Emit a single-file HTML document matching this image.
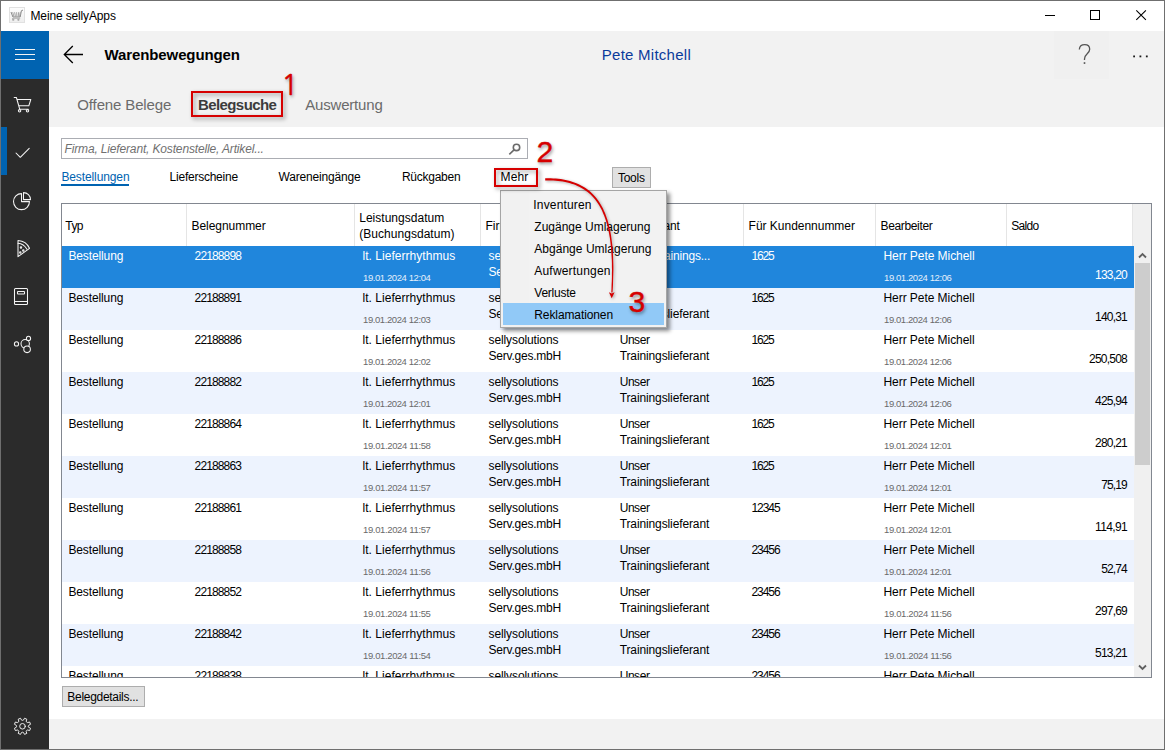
<!DOCTYPE html>
<html lang="de">
<head>
<meta charset="utf-8">
<title>Meine sellyApps</title>
<style>
*{box-sizing:border-box;margin:0;padding:0}
html,body{width:1165px;height:750px;overflow:hidden;background:#fff}
body{font-family:"Liberation Sans",sans-serif;font-size:12px;color:#000;position:relative}
.a{position:absolute}
.t{position:absolute;white-space:nowrap}
svg{position:absolute;overflow:visible}
#win{position:absolute;left:0;top:0;width:1165px;height:750px;border:1px solid #6f6f6f;pointer-events:none}
#titlebar{left:1px;top:1px;width:1163px;height:30px;background:#fff}
#side{left:1px;top:31px;width:48px;height:718px;background:#2b2b2b}
#ham{left:1px;top:31px;width:48px;height:48px;background:#0063b1}
#ind{left:1px;top:127px;width:6px;height:48px;background:#0063b1}
#hdr{left:49px;top:31px;width:1115px;height:96px;background:#f2f2f2}
#helpbg{left:1054px;top:31px;width:55px;height:48px;background:#f0f0f0}
#content{left:49px;top:127px;width:1115px;height:592px;background:#fff}
#foot{left:49px;top:719px;width:1115px;height:30px;background:#f2f2f2}
.redbox{position:absolute;border:2px solid #d60000;filter:drop-shadow(2px 2px 2px rgba(0,0,0,.4))}
#search{left:61px;top:138px;width:467px;height:21px;border:1px solid #abadb3;background:#fff}
#uline{left:61px;top:184px;width:68px;height:2px;background:#0063b1}
.btn{position:absolute;background:#e1e1e1;border:1px solid #adadad}
#tbl{left:61px;top:203px;width:1091px;height:475px;border:1px solid #828790;background:#fff}
#thead{left:62px;top:204px;width:1089px;height:42px;background:#fff}
.sep{position:absolute;top:204px;width:1px;height:42px;background:#e5e5e5}
#hfill{left:1133px;top:204px;width:18px;height:42px;background:#f0f0f0}
#tbody{left:62px;top:246px;width:1072px;height:431px;overflow:hidden;background:#fff}
.row{position:absolute;left:0;width:1072px;height:42px}
.alt{background:#edf3fe}
.sel{background:#2086dc}
#sbar{left:1134px;top:246px;width:17px;height:431px;background:#f0f0f0}
#thumb{left:1135px;top:263px;width:15px;height:202px;background:#cdcdcd}
#menu{left:500px;top:190px;width:167px;height:138px;background:#f2f2f2;border:1px solid #a5a5a5;box-shadow:3px 3px 4px rgba(0,0,0,.45)}
#mgut{left:501px;top:191px;width:28px;height:136px;background:#f1f1f1}
.rd{color:#d60000;font-family:"Liberation Sans","Noto Sans CJK JP",sans-serif;text-shadow:1px 2px 3.500px rgba(0,0,0,.45);-webkit-text-stroke:.35px #d60000}
#n1{font-family:"NanumGothic","Liberation Sans",sans-serif;-webkit-text-stroke:.5px #d60000}
#mhi{left:503px;top:303px;width:161px;height:22px;background:#91c9f7}
</style>
</head>
<body>
<div id="titlebar" class="a"></div>
<div id="side" class="a"></div>
<div id="ham" class="a"></div>
<div id="ind" class="a"></div>
<div id="hdr" class="a"></div>
<div id="helpbg" class="a"></div>
<div id="content" class="a"></div>
<div id="foot" class="a"></div>

<!-- title icon + window controls -->
<svg id="ticon" style="left:9px;top:7px" width="16" height="16" viewBox="0 0 16 16">
<defs><linearGradient id="tg" x1="0" y1="0" x2="0" y2="1"><stop offset="0" stop-color="#fdfdfd"/><stop offset="1" stop-color="#eeeeee"/></linearGradient></defs>
<rect x="0.5" y="0.5" width="15" height="15" fill="url(#tg)" stroke="#e1e1e1"/>
<path d="M2 5 L3.900 10 H11.200 L12.400 3.700 L14 3.100" fill="none" stroke="#8a8a8a" stroke-width="1"/>
<path d="M3.700 5.200 l1.300 4.600 M5.600 5.200 l.900 4.600 M7.600 5.200 l.300 4.600 M9.600 5.200 l-.300 4.600 M11.300 5.200 l-.800 4.600" fill="none" stroke="#9c9c9c" stroke-width=".9"/>
<path d="M3 11.500h8.200" stroke="#b0b0b0" stroke-width=".8"/>
<path d="M3 12.800h2.400M8.200 12.800h2.400M4.200 11.800v2M9.400 11.800v2" stroke="#a0a0a0" stroke-width=".9"/>
</svg>
<svg style="left:1040px;top:5px" width="120" height="22" viewBox="1040 5 120 22">
<path d="M1045 15.5h10" stroke="#000" stroke-width="1" fill="none"/>
<rect x="1090.5" y="10.5" width="9" height="9" stroke="#000" stroke-width="1" fill="none"/>
<path d="M1136.3 10.3l9.6 9.6M1145.9 10.3l-9.6 9.6" stroke="#000" stroke-width="1.1" fill="none"/>
</svg>

<!-- sidebar icons -->
<svg id="sicons" style="left:0;top:0" width="50" height="750" viewBox="0 0 50 750" fill="none" stroke="#f4f4f4" stroke-width="1.050" stroke-linecap="round" stroke-linejoin="round">
<path d="M15 49.5h20M15 54.5h20M15 59.5h20" stroke-width="1" stroke-linecap="butt"/>
<!-- cart -->
<path d="M14.2 97.5h2.2l3.300 11.700h8.600M17.200 99.500h13.600l-2 6.300h-9.600"/>
<circle cx="19.600" cy="110.800" r="1.200"/><circle cx="27.500" cy="110.800" r="1.200"/>
<!-- check -->
<path d="M16 153l4.3 4.3L29.2 148.3"/>
<!-- pie -->
<path d="M21.5 193.6a8 8 0 1 0 8 8h-8z"/>
<path d="M23.5 192.6v7h7a7 7 0 0 0-7-7z"/>
<!-- pizza -->
<path d="M18 240.5c5 .3 9.5 3.3 11.5 7.8l-11.5 8.4z"/>
<path d="M18 243.3c3.8.4 7 2.6 8.8 5.8"/>
<circle cx="21" cy="247.5" r=".7"/><circle cx="23.3" cy="250.5" r=".7"/><circle cx="20.3" cy="252.5" r=".7"/>
<!-- book -->
<rect x="14.5" y="288.5" width="13" height="16" rx="1"/>
<path d="M14.5 301.5h13"/>
<rect x="17.5" y="291.5" width="7" height="2.5" rx=".5"/>
<!-- share -->
<circle cx="25.200" cy="343.800" r="4.200"/>
<g fill="#2b2b2b"><circle cx="16.500" cy="343.900" r="2.100"/><circle cx="28.500" cy="338.400" r="2.100"/><circle cx="27.100" cy="349.300" r="3.300"/></g>
<!-- gear -->
<g transform="translate(22.5 726.3)" stroke-width=".95">
<circle r="2.8"/>
<path d="M6.22 0.99 L8.05 2.01 L7.11 4.27 L5.10 3.70 L4.17 4.17 L3.70 5.10 L4.27 7.11 L2.01 8.05 L0.99 6.22 L0.00 5.90 L-0.99 6.22 L-2.01 8.05 L-4.27 7.11 L-3.70 5.10 L-4.17 4.17 L-5.10 3.70 L-7.11 4.27 L-8.05 2.01 L-6.22 0.99 L-5.90 0.00 L-6.22 -0.99 L-8.05 -2.01 L-7.11 -4.27 L-5.10 -3.70 L-4.17 -4.17 L-3.70 -5.10 L-4.27 -7.11 L-2.01 -8.05 L-0.99 -6.22 L-0.00 -5.90 L0.99 -6.22 L2.01 -8.05 L4.27 -7.11 L3.70 -5.10 L4.17 -4.17 L5.10 -3.70 L7.11 -4.27 L8.05 -2.01 L6.22 -0.99 L5.90 -0.00Z"/>
</g>
</svg>

<!-- header icons -->
<svg style="left:0;top:0" width="1165" height="130" viewBox="0 0 1165 130" fill="none">
<path d="M83 54.5H64.5M72.8 46l-8.5 8.5 8.5 8.5" stroke="#000" stroke-width="1.3"/>
<path d="M1079.3 49.5c.3-3.2 2.6-4.8 5.4-4.8 3 0 5 1.9 5 4.6 0 2.300-1.300 3.600-2.900 5.000-1.500 1.300-2.300 2.400-2.300 4.600v1" stroke="#555" stroke-width="1.300"/>
<rect x="1083.700" y="62.2" width="1.600" height="1.700" fill="#555"/>
<rect x="1133.200" y="55.500" width="1.800" height="1.800" fill="#1a1a1a"/><rect x="1139.500" y="55.500" width="1.800" height="1.800" fill="#1a1a1a"/><rect x="1145.900" y="55.500" width="1.800" height="1.800" fill="#1a1a1a"/>
</svg>

<!-- content widgets -->
<div id="search" class="a"></div>
<svg style="left:508px;top:142px" width="14" height="14" viewBox="508 142 14 14" fill="none" stroke="#6a6a6a" stroke-width="1.600">
<circle cx="516.500" cy="147.400" r="3.200"/><path d="M514.300 149.700l-5 4.600"/>
</svg>
<div id="uline" class="a"></div>
<div class="btn" style="left:612px;top:167px;width:39px;height:21px"></div>

<!-- table -->
<div id="tbl" class="a"></div>
<div id="thead" class="a"></div>
<div class="sep" style="left:186px"></div>
<div class="sep" style="left:354px"></div>
<div class="sep" style="left:480px"></div>
<div class="sep" style="left:612px"></div>
<div class="sep" style="left:743px"></div>
<div class="sep" style="left:875px"></div>
<div class="sep" style="left:1006px"></div>
<div class="sep" style="left:1132px"></div>
<div id="hfill" class="a"></div>
<div id="tbody" class="a">
<div class="row sel" style="top:0"></div>
<div class="row alt" style="top:42px"></div>
<div class="row alt" style="top:126px"></div>
<div class="row alt" style="top:210px"></div>
<div class="row alt" style="top:294px"></div>
<div class="row alt" style="top:378px"></div>
<span class="t" style="left:6.40px;top:2.00px;font-size:12px;line-height:17px;letter-spacing:-0.118px;color:#fff;">Bestellung</span>
<span class="t" style="left:132.60px;top:2.00px;font-size:12px;line-height:17px;letter-spacing:-0.874px;color:#fff;">22188898</span>
<span class="t" style="left:300.50px;top:2.00px;font-size:12px;line-height:17px;letter-spacing:0.039px;color:#fff;">lt. Lieferrhythmus</span>
<span class="t" style="left:301.00px;top:25.00px;font-size:9.5px;line-height:13px;letter-spacing:-0.405px;color:#e4effb;">19.01.2024 12:04</span>
<span class="t" style="left:426.50px;top:2.00px;font-size:12px;line-height:17px;letter-spacing:-0.105px;color:#fff;">sellysolutions</span>
<span class="t" style="left:426.50px;top:18.00px;font-size:12px;line-height:17px;letter-spacing:-0.224px;color:#fff;">Serv.ges.mbH</span>
<span class="t" style="left:557.70px;top:2.00px;font-size:12px;line-height:17px;letter-spacing:-0.201px;color:#fff;">Unser Trainings...</span>
<span class="t" style="left:689.40px;top:2.00px;font-size:12px;line-height:17px;letter-spacing:-1.107px;color:#fff;">1625</span>
<span class="t" style="left:821.50px;top:2.00px;font-size:12px;line-height:17px;letter-spacing:-0.06px;color:#fff;">Herr Pete Michell</span>
<span class="t" style="left:822.00px;top:25.00px;font-size:9.5px;line-height:13px;letter-spacing:-0.405px;color:#e4effb;">19.01.2024 12:06</span>
<span class="t" style="left:1033.10px;top:21.00px;font-size:12px;line-height:17px;letter-spacing:-0.806px;color:#fff;">133,20</span>
<span class="t" style="left:6.40px;top:44.00px;font-size:12px;line-height:17px;letter-spacing:-0.118px;">Bestellung</span>
<span class="t" style="left:132.60px;top:44.00px;font-size:12px;line-height:17px;letter-spacing:-0.874px;">22188891</span>
<span class="t" style="left:300.50px;top:44.00px;font-size:12px;line-height:17px;letter-spacing:0.039px;">lt. Lieferrhythmus</span>
<span class="t" style="left:301.00px;top:67.00px;font-size:9.5px;line-height:13px;letter-spacing:-0.405px;color:#6a6a6a;">19.01.2024 12:03</span>
<span class="t" style="left:426.50px;top:44.00px;font-size:12px;line-height:17px;letter-spacing:-0.105px;">sellysolutions</span>
<span class="t" style="left:426.50px;top:60.00px;font-size:12px;line-height:17px;letter-spacing:-0.224px;">Serv.ges.mbH</span>
<span class="t" style="left:557.70px;top:44.00px;font-size:12px;line-height:17px;letter-spacing:-0.453px;">Unser</span>
<span class="t" style="left:557.70px;top:60.00px;font-size:12px;line-height:17px;letter-spacing:-0.116px;">Trainingslieferant</span>
<span class="t" style="left:689.40px;top:44.00px;font-size:12px;line-height:17px;letter-spacing:-1.107px;">1625</span>
<span class="t" style="left:821.50px;top:44.00px;font-size:12px;line-height:17px;letter-spacing:-0.06px;">Herr Pete Michell</span>
<span class="t" style="left:822.00px;top:67.00px;font-size:9.5px;line-height:13px;letter-spacing:-0.405px;color:#6a6a6a;">19.01.2024 12:06</span>
<span class="t" style="left:1033.10px;top:63.00px;font-size:12px;line-height:17px;letter-spacing:-0.806px;">140,31</span>
<span class="t" style="left:6.40px;top:86.00px;font-size:12px;line-height:17px;letter-spacing:-0.118px;">Bestellung</span>
<span class="t" style="left:132.60px;top:86.00px;font-size:12px;line-height:17px;letter-spacing:-0.874px;">22188886</span>
<span class="t" style="left:300.50px;top:86.00px;font-size:12px;line-height:17px;letter-spacing:0.039px;">lt. Lieferrhythmus</span>
<span class="t" style="left:301.00px;top:109.00px;font-size:9.5px;line-height:13px;letter-spacing:-0.405px;color:#6a6a6a;">19.01.2024 12:02</span>
<span class="t" style="left:426.50px;top:86.00px;font-size:12px;line-height:17px;letter-spacing:-0.105px;">sellysolutions</span>
<span class="t" style="left:426.50px;top:102.00px;font-size:12px;line-height:17px;letter-spacing:-0.224px;">Serv.ges.mbH</span>
<span class="t" style="left:557.70px;top:86.00px;font-size:12px;line-height:17px;letter-spacing:-0.453px;">Unser</span>
<span class="t" style="left:557.70px;top:102.00px;font-size:12px;line-height:17px;letter-spacing:-0.116px;">Trainingslieferant</span>
<span class="t" style="left:689.40px;top:86.00px;font-size:12px;line-height:17px;letter-spacing:-1.107px;">1625</span>
<span class="t" style="left:821.50px;top:86.00px;font-size:12px;line-height:17px;letter-spacing:-0.06px;">Herr Pete Michell</span>
<span class="t" style="left:822.00px;top:109.00px;font-size:9.5px;line-height:13px;letter-spacing:-0.405px;color:#6a6a6a;">19.01.2024 12:06</span>
<span class="t" style="left:1027.02px;top:105.00px;font-size:12px;line-height:17px;letter-spacing:-0.771px;">250,508</span>
<span class="t" style="left:6.40px;top:128.00px;font-size:12px;line-height:17px;letter-spacing:-0.118px;">Bestellung</span>
<span class="t" style="left:132.60px;top:128.00px;font-size:12px;line-height:17px;letter-spacing:-0.874px;">22188882</span>
<span class="t" style="left:300.50px;top:128.00px;font-size:12px;line-height:17px;letter-spacing:0.039px;">lt. Lieferrhythmus</span>
<span class="t" style="left:301.00px;top:151.00px;font-size:9.5px;line-height:13px;letter-spacing:-0.405px;color:#6a6a6a;">19.01.2024 12:01</span>
<span class="t" style="left:426.50px;top:128.00px;font-size:12px;line-height:17px;letter-spacing:-0.105px;">sellysolutions</span>
<span class="t" style="left:426.50px;top:144.00px;font-size:12px;line-height:17px;letter-spacing:-0.224px;">Serv.ges.mbH</span>
<span class="t" style="left:557.70px;top:128.00px;font-size:12px;line-height:17px;letter-spacing:-0.453px;">Unser</span>
<span class="t" style="left:557.70px;top:144.00px;font-size:12px;line-height:17px;letter-spacing:-0.116px;">Trainingslieferant</span>
<span class="t" style="left:689.40px;top:128.00px;font-size:12px;line-height:17px;letter-spacing:-1.107px;">1625</span>
<span class="t" style="left:821.50px;top:128.00px;font-size:12px;line-height:17px;letter-spacing:-0.06px;">Herr Pete Michell</span>
<span class="t" style="left:822.00px;top:151.00px;font-size:9.5px;line-height:13px;letter-spacing:-0.405px;color:#6a6a6a;">19.01.2024 12:06</span>
<span class="t" style="left:1033.10px;top:147.00px;font-size:12px;line-height:17px;letter-spacing:-0.806px;">425,94</span>
<span class="t" style="left:6.40px;top:170.00px;font-size:12px;line-height:17px;letter-spacing:-0.118px;">Bestellung</span>
<span class="t" style="left:132.60px;top:170.00px;font-size:12px;line-height:17px;letter-spacing:-0.874px;">22188864</span>
<span class="t" style="left:300.50px;top:170.00px;font-size:12px;line-height:17px;letter-spacing:0.039px;">lt. Lieferrhythmus</span>
<span class="t" style="left:301.00px;top:193.00px;font-size:9.5px;line-height:13px;letter-spacing:-0.358px;color:#6a6a6a;">19.01.2024 11:58</span>
<span class="t" style="left:426.50px;top:170.00px;font-size:12px;line-height:17px;letter-spacing:-0.105px;">sellysolutions</span>
<span class="t" style="left:426.50px;top:186.00px;font-size:12px;line-height:17px;letter-spacing:-0.224px;">Serv.ges.mbH</span>
<span class="t" style="left:557.70px;top:170.00px;font-size:12px;line-height:17px;letter-spacing:-0.453px;">Unser</span>
<span class="t" style="left:557.70px;top:186.00px;font-size:12px;line-height:17px;letter-spacing:-0.116px;">Trainingslieferant</span>
<span class="t" style="left:689.40px;top:170.00px;font-size:12px;line-height:17px;letter-spacing:-1.107px;">1625</span>
<span class="t" style="left:821.50px;top:170.00px;font-size:12px;line-height:17px;letter-spacing:-0.06px;">Herr Pete Michell</span>
<span class="t" style="left:822.00px;top:193.00px;font-size:9.5px;line-height:13px;letter-spacing:-0.405px;color:#6a6a6a;">19.01.2024 12:01</span>
<span class="t" style="left:1033.10px;top:189.00px;font-size:12px;line-height:17px;letter-spacing:-0.806px;">280,21</span>
<span class="t" style="left:6.40px;top:212.00px;font-size:12px;line-height:17px;letter-spacing:-0.118px;">Bestellung</span>
<span class="t" style="left:132.60px;top:212.00px;font-size:12px;line-height:17px;letter-spacing:-0.874px;">22188863</span>
<span class="t" style="left:300.50px;top:212.00px;font-size:12px;line-height:17px;letter-spacing:0.039px;">lt. Lieferrhythmus</span>
<span class="t" style="left:301.00px;top:235.00px;font-size:9.5px;line-height:13px;letter-spacing:-0.358px;color:#6a6a6a;">19.01.2024 11:57</span>
<span class="t" style="left:426.50px;top:212.00px;font-size:12px;line-height:17px;letter-spacing:-0.105px;">sellysolutions</span>
<span class="t" style="left:426.50px;top:228.00px;font-size:12px;line-height:17px;letter-spacing:-0.224px;">Serv.ges.mbH</span>
<span class="t" style="left:557.70px;top:212.00px;font-size:12px;line-height:17px;letter-spacing:-0.453px;">Unser</span>
<span class="t" style="left:557.70px;top:228.00px;font-size:12px;line-height:17px;letter-spacing:-0.116px;">Trainingslieferant</span>
<span class="t" style="left:689.40px;top:212.00px;font-size:12px;line-height:17px;letter-spacing:-1.107px;">1625</span>
<span class="t" style="left:821.50px;top:212.00px;font-size:12px;line-height:17px;letter-spacing:-0.06px;">Herr Pete Michell</span>
<span class="t" style="left:822.00px;top:235.00px;font-size:9.5px;line-height:13px;letter-spacing:-0.405px;color:#6a6a6a;">19.01.2024 12:01</span>
<span class="t" style="left:1039.18px;top:231.00px;font-size:12px;line-height:17px;letter-spacing:-0.859px;">75,19</span>
<span class="t" style="left:6.40px;top:254.00px;font-size:12px;line-height:17px;letter-spacing:-0.118px;">Bestellung</span>
<span class="t" style="left:132.60px;top:254.00px;font-size:12px;line-height:17px;letter-spacing:-0.874px;">22188861</span>
<span class="t" style="left:300.50px;top:254.00px;font-size:12px;line-height:17px;letter-spacing:0.039px;">lt. Lieferrhythmus</span>
<span class="t" style="left:301.00px;top:277.00px;font-size:9.5px;line-height:13px;letter-spacing:-0.358px;color:#6a6a6a;">19.01.2024 11:57</span>
<span class="t" style="left:426.50px;top:254.00px;font-size:12px;line-height:17px;letter-spacing:-0.105px;">sellysolutions</span>
<span class="t" style="left:426.50px;top:270.00px;font-size:12px;line-height:17px;letter-spacing:-0.224px;">Serv.ges.mbH</span>
<span class="t" style="left:557.70px;top:254.00px;font-size:12px;line-height:17px;letter-spacing:-0.453px;">Unser</span>
<span class="t" style="left:557.70px;top:270.00px;font-size:12px;line-height:17px;letter-spacing:-0.116px;">Trainingslieferant</span>
<span class="t" style="left:689.40px;top:254.00px;font-size:12px;line-height:17px;letter-spacing:-1.018px;">12345</span>
<span class="t" style="left:821.50px;top:254.00px;font-size:12px;line-height:17px;letter-spacing:-0.06px;">Herr Pete Michell</span>
<span class="t" style="left:822.00px;top:277.00px;font-size:9.5px;line-height:13px;letter-spacing:-0.405px;color:#6a6a6a;">19.01.2024 12:01</span>
<span class="t" style="left:1033.10px;top:273.00px;font-size:12px;line-height:17px;letter-spacing:-0.628px;">114,91</span>
<span class="t" style="left:6.40px;top:296.00px;font-size:12px;line-height:17px;letter-spacing:-0.118px;">Bestellung</span>
<span class="t" style="left:132.60px;top:296.00px;font-size:12px;line-height:17px;letter-spacing:-0.874px;">22188858</span>
<span class="t" style="left:300.50px;top:296.00px;font-size:12px;line-height:17px;letter-spacing:0.039px;">lt. Lieferrhythmus</span>
<span class="t" style="left:301.00px;top:319.00px;font-size:9.5px;line-height:13px;letter-spacing:-0.358px;color:#6a6a6a;">19.01.2024 11:56</span>
<span class="t" style="left:426.50px;top:296.00px;font-size:12px;line-height:17px;letter-spacing:-0.105px;">sellysolutions</span>
<span class="t" style="left:426.50px;top:312.00px;font-size:12px;line-height:17px;letter-spacing:-0.224px;">Serv.ges.mbH</span>
<span class="t" style="left:557.70px;top:296.00px;font-size:12px;line-height:17px;letter-spacing:-0.453px;">Unser</span>
<span class="t" style="left:557.70px;top:312.00px;font-size:12px;line-height:17px;letter-spacing:-0.116px;">Trainingslieferant</span>
<span class="t" style="left:689.40px;top:296.00px;font-size:12px;line-height:17px;letter-spacing:-1.018px;">23456</span>
<span class="t" style="left:821.50px;top:296.00px;font-size:12px;line-height:17px;letter-spacing:-0.06px;">Herr Pete Michell</span>
<span class="t" style="left:822.00px;top:319.00px;font-size:9.5px;line-height:13px;letter-spacing:-0.405px;color:#6a6a6a;">19.01.2024 12:01</span>
<span class="t" style="left:1039.18px;top:315.00px;font-size:12px;line-height:17px;letter-spacing:-0.859px;">52,74</span>
<span class="t" style="left:6.40px;top:338.00px;font-size:12px;line-height:17px;letter-spacing:-0.118px;">Bestellung</span>
<span class="t" style="left:132.60px;top:338.00px;font-size:12px;line-height:17px;letter-spacing:-0.874px;">22188852</span>
<span class="t" style="left:300.50px;top:338.00px;font-size:12px;line-height:17px;letter-spacing:0.039px;">lt. Lieferrhythmus</span>
<span class="t" style="left:301.00px;top:361.00px;font-size:9.5px;line-height:13px;letter-spacing:-0.358px;color:#6a6a6a;">19.01.2024 11:55</span>
<span class="t" style="left:426.50px;top:338.00px;font-size:12px;line-height:17px;letter-spacing:-0.105px;">sellysolutions</span>
<span class="t" style="left:426.50px;top:354.00px;font-size:12px;line-height:17px;letter-spacing:-0.224px;">Serv.ges.mbH</span>
<span class="t" style="left:557.70px;top:338.00px;font-size:12px;line-height:17px;letter-spacing:-0.453px;">Unser</span>
<span class="t" style="left:557.70px;top:354.00px;font-size:12px;line-height:17px;letter-spacing:-0.116px;">Trainingslieferant</span>
<span class="t" style="left:689.40px;top:338.00px;font-size:12px;line-height:17px;letter-spacing:-1.018px;">23456</span>
<span class="t" style="left:821.50px;top:338.00px;font-size:12px;line-height:17px;letter-spacing:-0.06px;">Herr Pete Michell</span>
<span class="t" style="left:822.00px;top:361.00px;font-size:9.5px;line-height:13px;letter-spacing:-0.358px;color:#6a6a6a;">19.01.2024 11:56</span>
<span class="t" style="left:1033.10px;top:357.00px;font-size:12px;line-height:17px;letter-spacing:-0.806px;">297,69</span>
<span class="t" style="left:6.40px;top:380.00px;font-size:12px;line-height:17px;letter-spacing:-0.118px;">Bestellung</span>
<span class="t" style="left:132.60px;top:380.00px;font-size:12px;line-height:17px;letter-spacing:-0.874px;">22188842</span>
<span class="t" style="left:300.50px;top:380.00px;font-size:12px;line-height:17px;letter-spacing:0.039px;">lt. Lieferrhythmus</span>
<span class="t" style="left:301.00px;top:403.00px;font-size:9.5px;line-height:13px;letter-spacing:-0.358px;color:#6a6a6a;">19.01.2024 11:54</span>
<span class="t" style="left:426.50px;top:380.00px;font-size:12px;line-height:17px;letter-spacing:-0.105px;">sellysolutions</span>
<span class="t" style="left:426.50px;top:396.00px;font-size:12px;line-height:17px;letter-spacing:-0.224px;">Serv.ges.mbH</span>
<span class="t" style="left:557.70px;top:380.00px;font-size:12px;line-height:17px;letter-spacing:-0.453px;">Unser</span>
<span class="t" style="left:557.70px;top:396.00px;font-size:12px;line-height:17px;letter-spacing:-0.116px;">Trainingslieferant</span>
<span class="t" style="left:689.40px;top:380.00px;font-size:12px;line-height:17px;letter-spacing:-1.018px;">23456</span>
<span class="t" style="left:821.50px;top:380.00px;font-size:12px;line-height:17px;letter-spacing:-0.06px;">Herr Pete Michell</span>
<span class="t" style="left:822.00px;top:403.00px;font-size:9.5px;line-height:13px;letter-spacing:-0.358px;color:#6a6a6a;">19.01.2024 11:56</span>
<span class="t" style="left:1033.10px;top:399.00px;font-size:12px;line-height:17px;letter-spacing:-0.806px;">513,21</span>
<span class="t" style="left:6.40px;top:422.00px;font-size:12px;line-height:17px;letter-spacing:-0.118px;">Bestellung</span>
<span class="t" style="left:132.60px;top:422.00px;font-size:12px;line-height:17px;letter-spacing:-0.874px;">22188838</span>
<span class="t" style="left:300.50px;top:422.00px;font-size:12px;line-height:17px;letter-spacing:0.039px;">lt. Lieferrhythmus</span>
<span class="t" style="left:301.00px;top:445.00px;font-size:9.5px;line-height:13px;letter-spacing:-0.358px;color:#6a6a6a;">19.01.2024 11:53</span>
<span class="t" style="left:426.50px;top:422.00px;font-size:12px;line-height:17px;letter-spacing:-0.105px;">sellysolutions</span>
<span class="t" style="left:426.50px;top:438.00px;font-size:12px;line-height:17px;letter-spacing:-0.224px;">Serv.ges.mbH</span>
<span class="t" style="left:557.70px;top:422.00px;font-size:12px;line-height:17px;letter-spacing:-0.453px;">Unser</span>
<span class="t" style="left:557.70px;top:438.00px;font-size:12px;line-height:17px;letter-spacing:-0.116px;">Trainingslieferant</span>
<span class="t" style="left:689.40px;top:422.00px;font-size:12px;line-height:17px;letter-spacing:-1.018px;">23456</span>
<span class="t" style="left:821.50px;top:422.00px;font-size:12px;line-height:17px;letter-spacing:-0.06px;">Herr Pete Michell</span>
<span class="t" style="left:822.00px;top:445.00px;font-size:9.5px;line-height:13px;letter-spacing:-0.358px;color:#6a6a6a;">19.01.2024 11:56</span>
<span class="t" style="left:1039.18px;top:441.00px;font-size:12px;line-height:17px;letter-spacing:-0.859px;">88,40</span>
</div>
<div id="sbar" class="a"></div>
<div id="thumb" class="a"></div>
<svg style="left:1134px;top:246px" width="17" height="431" viewBox="0 0 17 431" fill="none" stroke="#606060" stroke-width="1.800">
<path d="M5 11.500l3.500-3.500 3.500 3.500"/>
<path d="M5 419.500l3.500 3.500 3.500-3.500"/>
</svg>

<span class="t" style="left:30.50px;top:8.00px;font-size:12px;line-height:17px;letter-spacing:-0.141px;">Meine sellyApps</span>
<span class="t" style="left:104.60px;top:44.00px;font-size:15px;line-height:21px;letter-spacing:-0.114px;font-weight:bold">Warenbewegungen</span>
<span class="t" style="left:601.80px;top:44.00px;font-size:15px;line-height:21px;letter-spacing:0.255px;color:#0b3b9b">Pete Mitchell</span>
<span class="t" style="left:77.30px;top:94.00px;font-size:15px;line-height:21px;letter-spacing:-0.133px;color:#6b6b6b">Offene Belege</span>
<span class="t" style="left:197.90px;top:94.00px;font-size:15px;line-height:21px;letter-spacing:-0.573px;font-weight:bold;color:#3c3c3c">Belegsuche</span>
<span class="t" style="left:305.20px;top:94.00px;font-size:15px;line-height:21px;letter-spacing:-0.185px;color:#6b6b6b">Auswertung</span>
<span class="t" style="left:64.50px;top:141.00px;font-size:12px;line-height:17px;letter-spacing:-0.152px;font-style:italic;color:#707070">Firma, Lieferant, Kostenstelle, Artikel...</span>
<span class="t" style="left:61.40px;top:169.00px;font-size:12px;line-height:17px;letter-spacing:-0.11px;color:#0063b1">Bestellungen</span>
<span class="t" style="left:169.60px;top:169.00px;font-size:12px;line-height:17px;letter-spacing:-0.242px;">Lieferscheine</span>
<span class="t" style="left:278.50px;top:169.00px;font-size:12px;line-height:17px;letter-spacing:-0.184px;">Wareneingänge</span>
<span class="t" style="left:401.90px;top:169.00px;font-size:12px;line-height:17px;letter-spacing:-0.254px;">Rückgaben</span>
<span class="t" style="left:500.50px;top:169.00px;font-size:12px;line-height:17px;letter-spacing:0.152px;">Mehr</span>
<span class="t" style="left:617.90px;top:170.00px;font-size:12px;line-height:17px;letter-spacing:-0.228px;">Tools</span>
<span class="t" style="left:65.30px;top:218.00px;font-size:12px;line-height:17px;letter-spacing:-0.584px;">Typ</span>
<span class="t" style="left:191.50px;top:218.00px;font-size:12px;line-height:17px;letter-spacing:-0.051px;">Belegnummer</span>
<span class="t" style="left:359.20px;top:210.00px;font-size:12px;line-height:17px;letter-spacing:0.021px;">Leistungsdatum</span>
<span class="t" style="left:359.20px;top:226.00px;font-size:12px;line-height:17px;letter-spacing:0.041px;">(Buchungsdatum)</span>
<span class="t" style="left:485.40px;top:218.00px;font-size:12px;line-height:17px;letter-spacing:0.003px;">Firma</span>
<span class="t" style="left:634.00px;top:218.00px;font-size:12px;line-height:17px;letter-spacing:-0.096px;">Lieferant</span>
<span class="t" style="left:748.60px;top:218.00px;font-size:12px;line-height:17px;letter-spacing:-0.021px;">Für Kundennummer</span>
<span class="t" style="left:880.50px;top:218.00px;font-size:12px;line-height:17px;letter-spacing:-0.352px;">Bearbeiter</span>
<span class="t" style="left:1011.30px;top:218.00px;font-size:12px;line-height:17px;letter-spacing:-0.679px;">Saldo</span>

<div class="btn" style="left:62px;top:686px;width:83px;height:21px"></div>
<span class="t" style="left:67.30px;top:689.00px;font-size:12px;line-height:17px;letter-spacing:-0.289px;">Belegdetails...</span>

<!-- menu -->
<div id="menu" class="a"></div>
<div id="mgut" class="a"></div>
<div id="mhi" class="a"></div>
<span class="t" style="left:533.30px;top:197.00px;font-size:12px;line-height:17px;letter-spacing:0.163px;">Inventuren</span>
<span class="t" style="left:534.30px;top:219.00px;font-size:12px;line-height:17px;">Zugänge Umlagerung</span>
<span class="t" style="left:534.30px;top:241.00px;font-size:12px;line-height:17px;letter-spacing:0.025px;">Abgänge Umlagerung</span>
<span class="t" style="left:534.30px;top:263.00px;font-size:12px;line-height:17px;letter-spacing:0.193px;">Aufwertungen</span>
<span class="t" style="left:534.30px;top:285.00px;font-size:12px;line-height:17px;letter-spacing:-0.241px;">Verluste</span>
<span class="t" style="left:534.30px;top:307.00px;font-size:12px;line-height:17px;letter-spacing:-0.106px;">Reklamationen</span>

<!-- annotations -->
<div class="redbox" style="left:191px;top:91px;width:92px;height:26px"></div>
<div class="redbox" style="left:494px;top:168px;width:44px;height:19px"></div>
<svg style="left:0;top:0;filter:drop-shadow(1.500px 1.500px 1.500px rgba(0,0,0,.35))" width="1165" height="750" viewBox="0 0 1165 750" fill="none">
<path d="M545.2 180.5L547.9 180.5L550.6 180.5L553.1 180.6L555.7 180.8L558.1 181.0L560.5 181.3L562.8 181.6L565.1 182.0L567.3 182.5L569.4 183.1L571.5 183.7L573.5 184.3L575.5 185.1L577.4 185.9L579.2 186.7L581.0 187.7L582.8 188.7L584.4 189.7L586.1 190.9L587.6 192.1L589.1 193.3L590.6 194.6L592.0 196.0L593.4 197.5L594.7 199.0L595.9 200.6L597.1 202.3L598.3 204.0L599.4 205.8L600.5 207.7L601.5 209.6L602.4 211.6L603.3 213.7L604.2 215.8L605.0 218.1L605.8 220.3L606.5 222.7L607.2 225.1L607.8 227.6L608.4 230.2L608.9 232.8L609.4 235.5L609.9 238.3L610.3 241.2L610.6 244.1L610.9 247.1L611.2 250.1L611.4 253.3L611.6 256.5L611.8 259.8L611.9 263.1L611.9 266.5L612.0 270.0L611.9 273.6L611.9 277.2L611.8 280.9L611.6 284.7L611.5 288.5L611.3 292.5L612.5 292.5L612.8 288.6L613.0 284.8L613.1 281.0L613.2 277.2L613.3 273.6L613.4 270.0L613.4 266.5L613.3 263.1L613.2 259.7L613.1 256.4L612.9 253.2L612.7 250.0L612.5 246.9L612.2 243.9L611.8 241.0L611.4 238.1L611.0 235.3L610.5 232.5L610.0 229.9L609.4 227.2L608.8 224.7L608.1 222.2L607.4 219.8L606.6 217.5L605.8 215.2L605.0 213.0L604.0 210.9L603.1 208.8L602.0 206.8L601.0 204.9L599.8 203.0L598.7 201.2L597.4 199.5L596.1 197.8L594.8 196.2L593.4 194.7L591.9 193.2L590.4 191.8L588.9 190.5L587.2 189.3L585.5 188.1L583.8 187.0L582.0 185.9L580.1 184.9L578.2 184.0L576.3 183.2L574.2 182.4L572.1 181.7L570.0 181.0L567.8 180.4L565.5 179.9L563.2 179.5L560.8 179.1L558.3 178.8L555.8 178.6L553.3 178.4L550.6 178.3L547.9 178.2L545.2 178.3Z" fill="#d60000"/>
<path d="M608.900 292.200L611.700 298.200l2.900-6.000-2.900 1.200z" fill="#d60000"/>
</svg>
<span class="t rd" id="n1" style="left:281.300px;top:65px;font-size:28.500px;line-height:40px">1</span>
<span class="t rd" id="n2" style="left:536.400px;top:132px;font-size:30.200px;line-height:40px">2</span>
<span class="t rd" id="n3" style="left:628.400px;top:282px;font-size:30.200px;line-height:40px">3</span>

<div id="win"></div>
</body>
</html>
